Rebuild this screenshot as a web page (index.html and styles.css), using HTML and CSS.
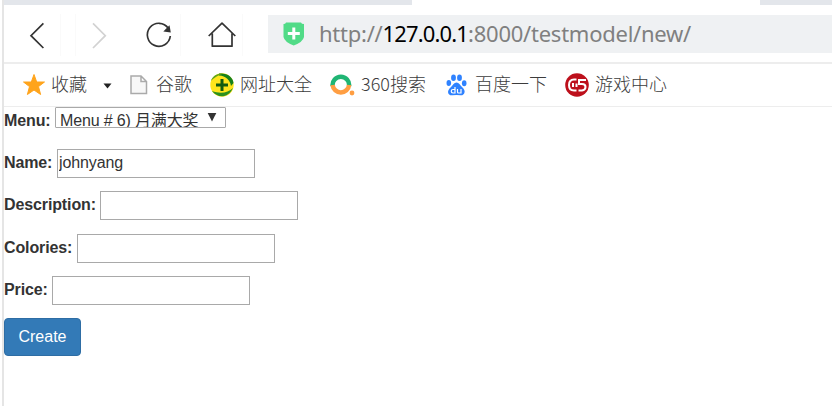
FILE: index.html
```html
<!DOCTYPE html>
<html lang="zh-CN">
<head>
<meta charset="utf-8">
<title>New</title>
<link rel="stylesheet" href="styles.css">
</head>
<body>
<div class="window">
  <div class="tabs"><span class="tab"></span></div>
  <header class="toolbar">
    <svg class="nav" width="264" height="57" viewBox="0 0 264 57" fill="none" stroke="#333" stroke-width="1.7">
      <path d="M39.4 18.4 27 30.7 39.4 43"/>
      <path d="M89 18.4 101.3 30.7 89 43" stroke="#d2d2d2"/>
      <path d="M164.3 23.2A11.5 11.5 0 1 0 166.3 31"/>
      <path d="M159.3 26.4 165.500 20.2 166.800 27.5Z" fill="#333" stroke="none"/>
      <path d="M204.7 31 218 18.2 231.3 31M208.3 28.4V41.2H228V28.4" stroke-linejoin="round"/>
      <path d="M56.5 9v42M71.5 9v42M176.5 9v42M238.5 9v42" stroke="#fafafa" stroke-width="1"/>
    </svg>
    <div class="address">
      <svg width="22" height="24" viewBox="0 0 22 24"><path d="M.5 2Q2.500 2 3 .5H18Q18.500 2 21 2V15Q20 20 10.700 23.500Q1.500 20 .5 15Z" fill="#51db87"/><path d="M10.800 5.500v12M4.800 11.500h12" stroke="#fff" stroke-width="3"/></svg>
      <div class="url">http://<b>127.0.0.1</b>:8000/testmodel/new/</div>
    </div>
  </header>
  <nav class="bookmarks">
    <div class="mark fav">
      <svg width="22" height="22" viewBox="0 0 22 22"><path d="M11 .5 13.700 8H21.500L15.500 12.600 17.600 20.500 11 16 4.400 20.500 6.500 12.600 .5 8H8.300Z" fill="#ffa41c" stroke="#ffa41c" stroke-linejoin="round"/></svg>
      <span>收藏</span>
      <svg class="caret" width="9" height="6" viewBox="0 0 9 6"><path d="M.5 .5h8L4.500 5.500Z" fill="#222"/></svg>
    </div>
    <div class="mark google">
      <svg width="18" height="20" viewBox="0 0 18 20" fill="#f7f7f7" stroke="#aaa" stroke-width="1.500"><path d="M1 1H11L16.500 6.500V18.500H1ZM11 1V6.500H16.500"/></svg>
      <span>谷歌</span>
    </div>
    <div class="mark sites">
      <svg width="24" height="24" viewBox="0 0 24 24"><circle cx="12" cy="12" r="11.700" fill="#ffe51c"/><path d="M9 .6C17 -.5 23 4 23.500 10L21 13C20 7 16 3 9 2.500Z" fill="#16811b"/><path d="M2 18C7 25 18 26 23 15C18 20 10 21 2 18Z" fill="#2c9020"/><path d="M.8 8C3 2 8 0 13 .8C8 2 4 5 .8 8Z" fill="#5da51c"/><path d="M12 6v12M6 12h12" stroke="#145c10" stroke-width="3"/></svg>
      <span>网址大全</span>
    </div>
    <div class="mark search">
      <svg width="25" height="22" viewBox="0 0 25 22" fill="none" stroke-width="4.500"><path d="M2.600 12A8.300 8.300 0 1 1 19.100 12" stroke="#20b574"/><path d="M2.600 11A8.300 8.300 0 0 0 19.100 11" stroke="#ff9e42"/><circle cx="22" cy="19" r="2.400" fill="#ff9e42"/></svg>
      <span>360搜索</span>
    </div>
    <div class="mark baidu">
      <svg width="21" height="22" viewBox="0 0 21 22" fill="#2f82ff"><ellipse cx="2.800" cy="9" rx="2.300" ry="3"/><ellipse cx="7.500" cy="3.800" rx="2.400" ry="3.200"/><ellipse cx="13.500" cy="3.800" rx="2.400" ry="3.200"/><ellipse cx="18.200" cy="9.300" rx="2.300" ry="3"/><path d="M10.500 8.500C13 8.500 14 11 16 13C21 17 18 22 14.500 21.300Q10.500 20.500 6.500 21.300C2 22 0 17 5 13C7 11 8 8.500 10.500 8.500Z"/><path d="M9 13v6H7a1.700 1.700 0 0 1 0-3.500h2M11.500 15v3q0 1 1 1h2.500v-4" fill="none" stroke="#fff" stroke-width="1.200"/></svg>
      <span>百度一下</span>
    </div>
    <div class="mark games">
      <svg width="24" height="24" viewBox="0 0 24 24"><circle cx="12" cy="12" r="11.800" fill="#bd101c"/><path d="M11.500 6.500H9Q4 6.500 4 12T9 17.500H11.500M11.500 10.500V14M21 7H14V11H17Q20.500 11 20.500 14T17 17.500H13.500M8 10V14" fill="none" stroke="#fff" stroke-width="2"/></svg>
      <span>游戏中心</span>
    </div>
  </nav>
  <form class="form">
    <div class="row menu"><label>Menu:</label><div class="select"><span>Menu # 6) 月满大奖</span><svg width="10" height="9" viewBox="0 0 10 9"><path d="M.7 0H9.300L5 8.500Z" fill="#333"/></svg></div></div>
    <div class="row name"><label for="name">Name:</label><input id="name" value="johnyang"></div>
    <div class="row description"><label for="description">Description:</label><input id="description"></div>
    <div class="row colories"><label for="colories">Colories:</label><input id="colories"></div>
    <div class="row price"><label for="price">Price:</label><input id="price"></div>
    <button type="button">Create</button>
  </form>
</div>
</body>
</html>
```
FILE: styles.css
```css
* { box-sizing: border-box; }
body { margin: 0; background: #fff; overflow: hidden; }
svg { display: block; flex: none; }
.window {
  height: 406px;
  margin-left: 2px;
  border-left: 2px solid #e5e5e5;
  font-family: "Liberation Sans", "Noto Sans CJK SC", sans-serif;
}
.tabs { height: 5px; background: #e3e6eb; }
.tab { display: block; width: 348px; height: 5px; margin-left: 408px; background: #fff; }
.toolbar { display: flex; height: 59px; border-bottom: 2px solid #ededed; }
.address {
  display: flex;
  align-items: center;
  flex: 1;
  height: 38px;
  margin-top: 10px;
  padding-left: 15px;
  background: #eff1f3;
}
.url {
  margin-left: 14px;
  padding-bottom: 2px;
  font: 22px/36px "Noto Sans", sans-serif;
  letter-spacing: -0.250px;
  color: #808080;
  white-space: nowrap;
}
.url b { color: #000; font-weight: 400; letter-spacing: -0.850px; }
.bookmarks { display: flex; height: 43px; padding-left: 19px; border-bottom: 1px solid #ededed; }
.mark {
  display: flex;
  align-items: center;
  flex: none;
  height: 42px;
  color: #3c3c3c;
  font: 300 18px/39px "Noto Sans CJK SC", sans-serif;
  white-space: nowrap;
}
.mark span { padding-bottom: 3px; }
.fav { width: 107px; }
.fav span { margin: 0 16px 0 6px; }
.fav .caret { margin-top: 2px; }
.google { width: 80px; }
.google span { margin-left: 8px; }
.sites { width: 120px; }
.sites span { margin-left: 6px; }
.search { width: 116px; }
.search span { margin-left: 6px; }
.baidu { width: 119px; }
.baidu span { margin-left: 8px; }
.games span { margin-left: 6px; }
.form { color: #333; font-size: 16px; }
.row { display: flex; height: 29px; margin-bottom: 13.200px; }
.row label { font-weight: 700; line-height: 27px; letter-spacing: -0.120px; white-space: nowrap; }
.row input {
  width: 198.400px;
  height: 29px;
  padding: 0 1px 2px;
  border: 1px solid #a9a9a9;
  border-radius: 0;
  outline: 0;
  background: #fff;
  color: #333;
  font: 16px "Liberation Sans", sans-serif;
  letter-spacing: -0.100px;
}
.menu label { width: 51px; }
.name label { width: 53px; }
.description label { width: 96px; }
.colories label { width: 73px; }
.price label { width: 48px; }
.select {
  display: flex;
  width: 171px;
  height: 21px;
  padding-left: 4px;
  border: 1px solid #a9a9a9;
  border-radius: 1px;
  overflow: hidden;
  white-space: nowrap;
  line-height: 26px;
  letter-spacing: -0.150px;
}
.select span { width: 147px; }
.select svg { margin-top: 5px; }
button {
  display: block;
  width: 77px;
  height: 38px;
  padding: 0;
  border: 1px solid #2e6da4;
  border-radius: 4px;
  background: #337ab7;
  color: #fff;
  font: 16px "Liberation Sans", sans-serif;
}
```
